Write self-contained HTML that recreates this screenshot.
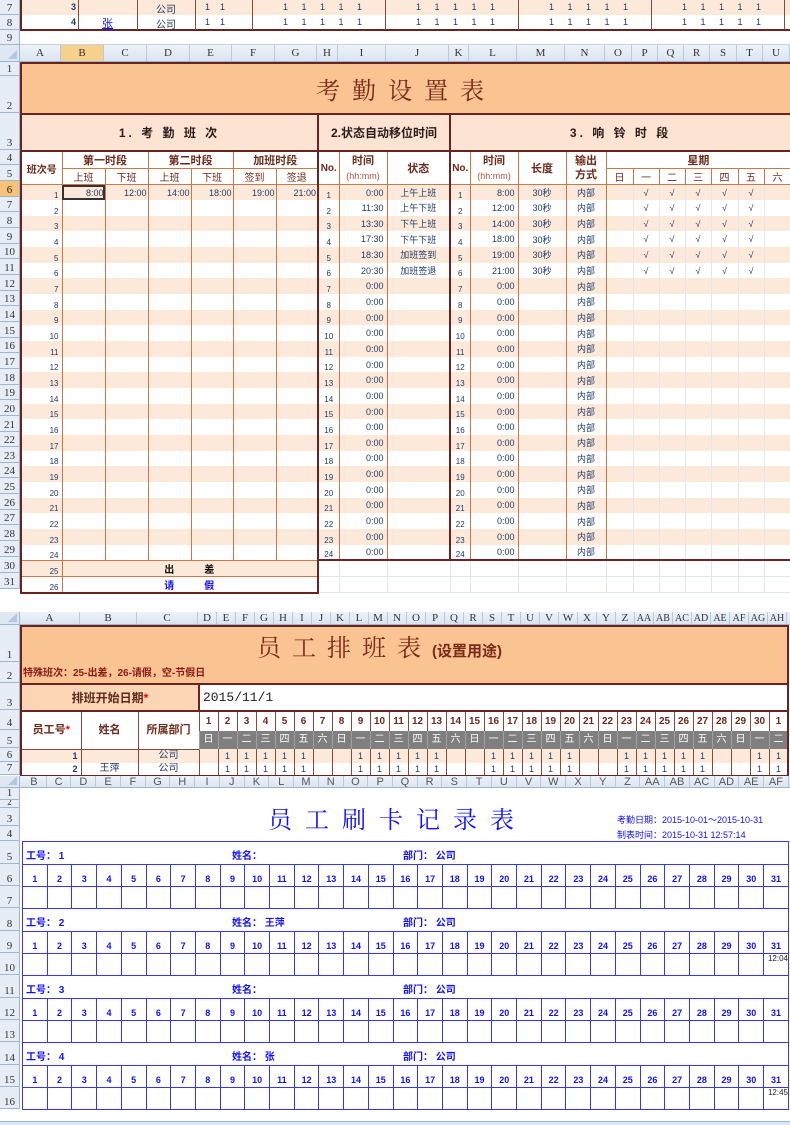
<!DOCTYPE html>
<html><head><meta charset="utf-8">
<style>
*{margin:0;padding:0;box-sizing:border-box}
body{width:790px;height:1125px;position:relative;overflow:hidden;background:#fff;font-family:"Liberation Sans","Noto Sans CJK SC",sans-serif}
.abs{position:absolute}
.rh{position:absolute;left:0;width:20px;display:flex;flex-direction:column;background:#e6edf6}
.rh div{border-bottom:1px solid #9eb6ce;border-right:1px solid #9eb6ce;font:11px "Liberation Serif","Noto Serif CJK SC",serif;color:#333;text-align:center;display:flex;align-items:flex-end;justify-content:center;padding-bottom:0px;line-height:12px;overflow:hidden}
.rh div.sel{background:#f7c27a;color:#222}
.ch{position:absolute;display:flex;height:100%;}
.chrow{position:absolute;left:0;width:790px;background:linear-gradient(#eef3fa,#dae4f1);border-bottom:1px solid #9eb6ce}
.chrow .corner{position:absolute;left:0;top:0;width:20px;height:100%;border-right:1px solid #9eb6ce;background:#dfe7f2}
.chrow .corner:after{content:"";position:absolute;right:2px;bottom:2px;border-left:9px solid transparent;border-bottom:9px solid #b7c7db}
.ch div{border-right:1px solid #b9c9dc;text-align:center;font:11px "Liberation Serif",serif;color:#333;display:flex;align-items:center;justify-content:center;overflow:hidden}
.ch.sans div{font-family:"Liberation Sans",sans-serif;color:#555}
table{border-collapse:collapse;table-layout:fixed}
td{padding:0;overflow:hidden;white-space:nowrap}
#t2{position:absolute;left:20px;top:62px;width:770px;font-size:9px;color:#1f3a6a}
#t2 td{border:0}
#t2 tr.b td{text-align:center;vertical-align:middle}
#t2 tr.p td{background:#fde9d9}
#t2 tr.w td{background:#fff}
#t2 tr.b td:nth-child(1){text-align:right;padding-right:3px;border-left:2px solid #6b2222;font-size:8px;vertical-align:bottom}
#t2 tr.b td:nth-child(n+2):nth-child(-n+7){border-left:1px solid #c8784a;text-align:right;padding-right:1px}
#t2 tr.b td:nth-child(7){border-right:2px solid #6b2222}
#t2 tr.b td:nth-child(8){font-size:8px;vertical-align:bottom}
#t2 tr.b td:nth-child(9){border-left:1px solid #c8784a;text-align:right;padding-right:3px}
#t2 tr.b td:nth-child(10){border-left:1px solid #c8784a}
#t2 tr.b td:nth-child(11){border-left:2px solid #6b2222;font-size:8px;vertical-align:bottom}
#t2 tr.b td:nth-child(12){border-left:1px solid #c8784a;text-align:right;padding-right:3px}
#t2 tr.b td:nth-child(13){border-left:1px solid #c8784a}
#t2 tr.b td:nth-child(14){border-left:1px solid #c8784a;border-right:1px solid #c8784a}
#t2 tr.b td:nth-child(n+16){border-left:1px solid #e2e6ee}
#t2 tr.b td:nth-child(21){border-right:2px solid #6b2222}
#t2 tr.b td.g{background:#fff !important;border-left:0 !important;border-right:1px solid #dfe6f0 !important;border-bottom:1px solid #dfe6f0}
#t2 tr.b td.c{text-align:center !important;font-weight:bold;font-size:10px;border-right:2px solid #6b2222 !important;border-left:1px solid #c8784a !important}
#t2 .hd td{color:#6b2a1a;font-weight:bold;font-size:11px;text-align:center;background:#fff;border-left:1px solid #c8784a;border-bottom:1px solid #c8784a}
#t2 .hd td.n{font-weight:normal;font-size:10px}
#t2 .L2{border-left:2px solid #6b2222 !important}
#t2 .R2{border-right:2px solid #6b2222 !important}
#t3{position:absolute;left:20px;top:625px;width:767px;font-size:9px;color:#1f3a6a}
#t3 td{text-align:center;border-left:1px solid #8a4a3a;line-height:10px}
#t3 .wd td{background:#7f7f7f;color:#fff;font-size:10px;border-left:1px solid #a0a0a0}
#t3 .dn td{font-weight:bold;color:#6b2a1a;font-size:10px}
.g4{position:absolute;left:22px;width:767px;font-size:9px;color:#1010ff;font-weight:bold}
.g4 table{width:767px}
.g4 td{border:1px solid #3535ff;text-align:center;vertical-align:bottom;height:22px;padding-bottom:2px}
.g4 .lab{height:23px;border:1px solid #3535ff;border-bottom:0;position:relative;font-size:10px}
.g4 .lab span{position:absolute;top:5px}
</style></head><body>

<div class="rh" style="top:0"><div style="height:15px">7</div><div style="height:15px">8</div><div style="height:15px">9</div></div>
<div class="abs" style="left:20px;top:0;width:770px;height:15px;background:#fde9d9"></div>
<div class="abs" style="left:20px;top:0;width:2px;height:31px;background:#6b2222"></div>
<div class="abs" style="left:20px;top:29px;width:770px;height:2px;background:#6b2222"></div>
<div class="abs" style="left:78px;top:0;width:1px;height:30px;background:#8a4a3a"></div>
<div class="abs" style="left:137px;top:0;width:1px;height:30px;background:#8a4a3a"></div>
<div class="abs" style="left:195px;top:0;width:1px;height:30px;background:#8a4a3a"></div>
<div class="abs" style="left:252px;top:0;width:1px;height:30px;background:#8a4a3a"></div>
<div class="abs" style="left:385px;top:0;width:1px;height:30px;background:#8a4a3a"></div>
<div class="abs" style="left:518px;top:0;width:1px;height:30px;background:#8a4a3a"></div>
<div class="abs" style="left:651px;top:0;width:1px;height:30px;background:#8a4a3a"></div>
<div class="abs" style="left:784px;top:0;width:1px;height:30px;background:#8a4a3a"></div>
<div class="abs" style="left:20px;top:44px;width:770px;height:1px;background:#c5d3e3"></div>
<div class="abs" style="left:0;top:2px;width:76px;text-align:right;font-size:9px;font-weight:bold;color:#1f3a6a">3</div>
<div class="abs" style="left:0;top:17px;width:76px;text-align:right;font-size:9px;font-weight:bold;color:#1f3a6a">4</div>
<div class="abs" style="left:137px;top:1px;width:58px;text-align:center;font-size:10px;color:#1f3a6a">公司</div>
<div class="abs" style="left:137px;top:16px;width:58px;text-align:center;font-size:10px;color:#1f3a6a">公司</div>
<div class="abs" style="left:78px;top:15px;width:59px;text-align:center;font-size:11px;color:#1010ff;text-decoration:underline">张</div>
<div class="abs" style="left:205px;top:2px;font-size:9px;color:#1f3a6a;white-space:pre">1    1</div>
<div class="abs" style="left:205px;top:17px;font-size:9px;color:#1f3a6a;white-space:pre">1    1</div>
<div class="abs" style="left:283px;top:2px;font-size:9px;color:#1f3a6a;white-space:pre;word-spacing:11px">1 1 1 1 1</div>
<div class="abs" style="left:283px;top:17px;font-size:9px;color:#1f3a6a;white-space:pre;word-spacing:11px">1 1 1 1 1</div>
<div class="abs" style="left:416px;top:2px;font-size:9px;color:#1f3a6a;white-space:pre;word-spacing:11px">1 1 1 1 1</div>
<div class="abs" style="left:549px;top:2px;font-size:9px;color:#1f3a6a;white-space:pre;word-spacing:11px">1 1 1 1 1</div>
<div class="abs" style="left:682px;top:2px;font-size:9px;color:#1f3a6a;white-space:pre;word-spacing:11px">1 1 1 1 1</div>
<div class="abs" style="left:416px;top:17px;font-size:9px;color:#1f3a6a;white-space:pre;word-spacing:11px">1 1 1 1 1</div>
<div class="abs" style="left:549px;top:17px;font-size:9px;color:#1f3a6a;white-space:pre;word-spacing:11px">1 1 1 1 1</div>
<div class="abs" style="left:682px;top:17px;font-size:9px;color:#1f3a6a;white-space:pre;word-spacing:11px">1 1 1 1 1</div>

<div class="chrow" style="top:45px;height:17px"><div class="corner"></div>
<div class="ch" style="left:20px">
<div style="width:41px">A</div><div style="width:43px;background:#f7d08c">B</div><div style="width:43px">C</div><div style="width:43px">D</div><div style="width:42px">E</div><div style="width:43px">F</div><div style="width:42px">G</div><div style="width:21px">H</div><div style="width:48px">I</div><div style="width:63px">J</div><div style="width:20px">K</div><div style="width:48px">L</div><div style="width:48px">M</div><div style="width:40px">N</div><div style="width:27px">O</div><div style="width:26px">P</div><div style="width:26px">Q</div><div style="width:26px">R</div><div style="width:27px">S</div><div style="width:26px">T</div><div style="width:27px">U</div>
</div></div>
<div class="rh" style="top:62px">
<div style="height:14px">1</div><div style="height:37px">2</div><div style="height:37px">3</div><div style="height:15px">4</div><div style="height:16px">5</div>
<div class="sel" style="height:15.667px">6</div><div style="height:15.667px">7</div><div style="height:15.667px">8</div><div style="height:15.667px">9</div><div style="height:15.667px">10</div><div style="height:15.667px">11</div><div style="height:15.667px">12</div><div style="height:15.667px">13</div><div style="height:15.667px">14</div><div style="height:15.667px">15</div><div style="height:15.667px">16</div><div style="height:15.667px">17</div><div style="height:15.667px">18</div><div style="height:15.667px">19</div><div style="height:15.667px">20</div><div style="height:15.667px">21</div><div style="height:15.667px">22</div><div style="height:15.667px">23</div><div style="height:15.667px">24</div><div style="height:15.667px">25</div><div style="height:15.667px">26</div><div style="height:15.667px">27</div><div style="height:15.667px">28</div><div style="height:15.667px">29</div>
<div style="height:16px">30</div><div style="height:16px">31</div></div>

<table id="t2">
<colgroup><col style="width:41px"><col style="width:43px"><col style="width:43px"><col style="width:43px"><col style="width:42px"><col style="width:43px"><col style="width:42px"><col style="width:21px"><col style="width:48px"><col style="width:63px"><col style="width:20px"><col style="width:48px"><col style="width:48px"><col style="width:40px"><col style="width:27px"><col style="width:26px"><col style="width:26px"><col style="width:26px"><col style="width:27px"><col style="width:26px"><col style="width:27px"></colgroup>
<tr style="height:51px"><td colspan="21" style="background:#f9c392;border:2px solid #6b2222;text-align:center;font:24px 'Liberation Serif','Noto Serif CJK SC',serif;color:#7a2a1a;letter-spacing:12px">考勤设置表</td></tr>
<tr style="height:37px">
<td colspan="7" style="background:#fde4d2;border:2px solid #6b2222;text-align:center;font-weight:bold;font-size:12px;color:#2a1a1a;letter-spacing:3px">1. 考 勤 班 次</td>
<td colspan="3" style="background:#fde4d2;border:2px solid #6b2222;text-align:center;font-weight:bold;font-size:12px;color:#2a1a1a">2.状态自动移位时间</td>
<td colspan="11" style="background:#fde4d2;border:2px solid #6b2222;text-align:center;font-weight:bold;font-size:12px;color:#2a1a1a;letter-spacing:3px">3. 响 铃 时 段</td></tr>
<tr class="hd" style="height:15px">
<td rowspan="2" class="L2" style="font-size:10px">班次号</td><td colspan="2">第一时段</td><td colspan="2">第二时段</td><td colspan="2" class="R2">加班时段</td>
<td rowspan="2" style="font-size:10px;border-left:0">No.</td><td style="border-bottom:0">时间</td><td rowspan="2">状态</td>
<td rowspan="2" class="L2" style="font-size:10px">No.</td><td style="border-bottom:0">时间</td><td rowspan="2">长度</td><td rowspan="2" style="line-height:14px">输出<br>方式</td><td colspan="7" class="R2">星期</td></tr>
<tr class="hd" style="height:16px">
<td class="n">上班</td><td class="n">下班</td><td class="n">上班</td><td class="n">下班</td><td class="n">签到</td><td class="n R2">签退</td>
<td class="n" style="color:#b0503a;font-size:9px">(hh:mm)</td><td class="n" style="color:#b0503a;font-size:9px">(hh:mm)</td>
<td class="n">日</td><td class="n">一</td><td class="n">二</td><td class="n">三</td><td class="n">四</td><td class="n">五</td><td class="n R2">六</td></tr>
<tr class="b p" style="height:15.667px"><td>1</td><td style="outline:2px solid #333;outline-offset:-2px">8:00</td><td>12:00</td><td>14:00</td><td>18:00</td><td>19:00</td><td>21:00</td><td>1</td><td>0:00</td><td>上午上班</td><td>1</td><td>8:00</td><td>30秒</td><td>内部</td><td></td><td>√</td><td>√</td><td>√</td><td>√</td><td>√</td><td></td></tr>
<tr class="b w" style="height:15.667px"><td>2</td><td></td><td></td><td></td><td></td><td></td><td></td><td>2</td><td>11:30</td><td>上午下班</td><td>2</td><td>12:00</td><td>30秒</td><td>内部</td><td></td><td>√</td><td>√</td><td>√</td><td>√</td><td>√</td><td></td></tr>
<tr class="b p" style="height:15.667px"><td>3</td><td></td><td></td><td></td><td></td><td></td><td></td><td>3</td><td>13:30</td><td>下午上班</td><td>3</td><td>14:00</td><td>30秒</td><td>内部</td><td></td><td>√</td><td>√</td><td>√</td><td>√</td><td>√</td><td></td></tr>
<tr class="b w" style="height:15.667px"><td>4</td><td></td><td></td><td></td><td></td><td></td><td></td><td>4</td><td>17:30</td><td>下午下班</td><td>4</td><td>18:00</td><td>30秒</td><td>内部</td><td></td><td>√</td><td>√</td><td>√</td><td>√</td><td>√</td><td></td></tr>
<tr class="b p" style="height:15.667px"><td>5</td><td></td><td></td><td></td><td></td><td></td><td></td><td>5</td><td>18:30</td><td>加班签到</td><td>5</td><td>19:00</td><td>30秒</td><td>内部</td><td></td><td>√</td><td>√</td><td>√</td><td>√</td><td>√</td><td></td></tr>
<tr class="b w" style="height:15.667px"><td>6</td><td></td><td></td><td></td><td></td><td></td><td></td><td>6</td><td>20:30</td><td>加班签退</td><td>6</td><td>21:00</td><td>30秒</td><td>内部</td><td></td><td>√</td><td>√</td><td>√</td><td>√</td><td>√</td><td></td></tr>
<tr class="b p" style="height:15.667px"><td>7</td><td></td><td></td><td></td><td></td><td></td><td></td><td>7</td><td>0:00</td><td></td><td>7</td><td>0:00</td><td></td><td>内部</td><td></td><td></td><td></td><td></td><td></td><td></td><td></td></tr>
<tr class="b w" style="height:15.667px"><td>8</td><td></td><td></td><td></td><td></td><td></td><td></td><td>8</td><td>0:00</td><td></td><td>8</td><td>0:00</td><td></td><td>内部</td><td></td><td></td><td></td><td></td><td></td><td></td><td></td></tr>
<tr class="b p" style="height:15.667px"><td>9</td><td></td><td></td><td></td><td></td><td></td><td></td><td>9</td><td>0:00</td><td></td><td>9</td><td>0:00</td><td></td><td>内部</td><td></td><td></td><td></td><td></td><td></td><td></td><td></td></tr>
<tr class="b w" style="height:15.667px"><td>10</td><td></td><td></td><td></td><td></td><td></td><td></td><td>10</td><td>0:00</td><td></td><td>10</td><td>0:00</td><td></td><td>内部</td><td></td><td></td><td></td><td></td><td></td><td></td><td></td></tr>
<tr class="b p" style="height:15.667px"><td>11</td><td></td><td></td><td></td><td></td><td></td><td></td><td>11</td><td>0:00</td><td></td><td>11</td><td>0:00</td><td></td><td>内部</td><td></td><td></td><td></td><td></td><td></td><td></td><td></td></tr>
<tr class="b w" style="height:15.667px"><td>12</td><td></td><td></td><td></td><td></td><td></td><td></td><td>12</td><td>0:00</td><td></td><td>12</td><td>0:00</td><td></td><td>内部</td><td></td><td></td><td></td><td></td><td></td><td></td><td></td></tr>
<tr class="b p" style="height:15.667px"><td>13</td><td></td><td></td><td></td><td></td><td></td><td></td><td>13</td><td>0:00</td><td></td><td>13</td><td>0:00</td><td></td><td>内部</td><td></td><td></td><td></td><td></td><td></td><td></td><td></td></tr>
<tr class="b w" style="height:15.667px"><td>14</td><td></td><td></td><td></td><td></td><td></td><td></td><td>14</td><td>0:00</td><td></td><td>14</td><td>0:00</td><td></td><td>内部</td><td></td><td></td><td></td><td></td><td></td><td></td><td></td></tr>
<tr class="b p" style="height:15.667px"><td>15</td><td></td><td></td><td></td><td></td><td></td><td></td><td>15</td><td>0:00</td><td></td><td>15</td><td>0:00</td><td></td><td>内部</td><td></td><td></td><td></td><td></td><td></td><td></td><td></td></tr>
<tr class="b w" style="height:15.667px"><td>16</td><td></td><td></td><td></td><td></td><td></td><td></td><td>16</td><td>0:00</td><td></td><td>16</td><td>0:00</td><td></td><td>内部</td><td></td><td></td><td></td><td></td><td></td><td></td><td></td></tr>
<tr class="b p" style="height:15.667px"><td>17</td><td></td><td></td><td></td><td></td><td></td><td></td><td>17</td><td>0:00</td><td></td><td>17</td><td>0:00</td><td></td><td>内部</td><td></td><td></td><td></td><td></td><td></td><td></td><td></td></tr>
<tr class="b w" style="height:15.667px"><td>18</td><td></td><td></td><td></td><td></td><td></td><td></td><td>18</td><td>0:00</td><td></td><td>18</td><td>0:00</td><td></td><td>内部</td><td></td><td></td><td></td><td></td><td></td><td></td><td></td></tr>
<tr class="b p" style="height:15.667px"><td>19</td><td></td><td></td><td></td><td></td><td></td><td></td><td>19</td><td>0:00</td><td></td><td>19</td><td>0:00</td><td></td><td>内部</td><td></td><td></td><td></td><td></td><td></td><td></td><td></td></tr>
<tr class="b w" style="height:15.667px"><td>20</td><td></td><td></td><td></td><td></td><td></td><td></td><td>20</td><td>0:00</td><td></td><td>20</td><td>0:00</td><td></td><td>内部</td><td></td><td></td><td></td><td></td><td></td><td></td><td></td></tr>
<tr class="b p" style="height:15.667px"><td>21</td><td></td><td></td><td></td><td></td><td></td><td></td><td>21</td><td>0:00</td><td></td><td>21</td><td>0:00</td><td></td><td>内部</td><td></td><td></td><td></td><td></td><td></td><td></td><td></td></tr>
<tr class="b w" style="height:15.667px"><td>22</td><td></td><td></td><td></td><td></td><td></td><td></td><td>22</td><td>0:00</td><td></td><td>22</td><td>0:00</td><td></td><td>内部</td><td></td><td></td><td></td><td></td><td></td><td></td><td></td></tr>
<tr class="b p" style="height:15.667px"><td>23</td><td></td><td></td><td></td><td></td><td></td><td></td><td>23</td><td>0:00</td><td></td><td>23</td><td>0:00</td><td></td><td>内部</td><td></td><td></td><td></td><td></td><td></td><td></td><td></td></tr>
<tr class="b w" style="height:15.667px"><td>24</td><td></td><td></td><td></td><td></td><td></td><td></td><td>24</td><td>0:00</td><td></td><td>24</td><td>0:00</td><td></td><td>内部</td><td></td><td></td><td></td><td></td><td></td><td></td><td></td></tr>
<tr class="b p" style="height:16px"><td style="border-top:1px solid #c8784a">25</td><td colspan="6" class="c" style="color:#111;border-top:1px solid #c8784a">出　　　差</td><td class="g" style="border-top:2px solid #6b2222"></td><td class="g" style="border-top:2px solid #6b2222"></td><td class="g" style="border-top:2px solid #6b2222"></td><td class="g" style="border-top:2px solid #6b2222"></td><td class="g" style="border-top:2px solid #6b2222"></td><td class="g" style="border-top:2px solid #6b2222"></td><td class="g" style="border-top:2px solid #6b2222"></td><td class="g" style="border-top:2px solid #6b2222"></td><td class="g" style="border-top:2px solid #6b2222"></td><td class="g" style="border-top:2px solid #6b2222"></td><td class="g" style="border-top:2px solid #6b2222"></td><td class="g" style="border-top:2px solid #6b2222"></td><td class="g" style="border-top:2px solid #6b2222"></td><td class="g" style="border-top:2px solid #6b2222"></td></tr>
<tr class="b w" style="height:16px"><td style="border-bottom:2px solid #6b2222;border-top:1px solid #c8784a">26</td><td colspan="6" class="c" style="color:#1010ff;border-bottom:2px solid #6b2222;border-top:1px solid #c8784a">请　　　假</td><td class="g"></td><td class="g"></td><td class="g"></td><td class="g"></td><td class="g"></td><td class="g"></td><td class="g"></td><td class="g"></td><td class="g"></td><td class="g"></td><td class="g"></td><td class="g"></td><td class="g"></td><td class="g"></td></tr>
</table>

<div class="chrow" style="top:612px;height:13px"><div class="corner"></div>
<div class="ch" style="left:20px">
<div style="width:60px">A</div><div style="width:57px">B</div><div style="width:61px">C</div><div style="width:19px">D</div><div style="width:19px">E</div><div style="width:19px">F</div><div style="width:19px">G</div><div style="width:19px">H</div><div style="width:19px">I</div><div style="width:19px">J</div><div style="width:19px">K</div><div style="width:19px">L</div><div style="width:19px">M</div><div style="width:19px">N</div><div style="width:19px">O</div><div style="width:19px">P</div><div style="width:19px">Q</div><div style="width:19px">R</div><div style="width:19px">S</div><div style="width:19px">T</div><div style="width:19px">U</div><div style="width:19px">V</div><div style="width:19px">W</div><div style="width:19px">X</div><div style="width:19px">Y</div><div style="width:19px">Z</div><div style="width:19px;font-size:10px">AA</div><div style="width:19px;font-size:10px">AB</div><div style="width:19px;font-size:10px">AC</div><div style="width:19px;font-size:10px">AD</div><div style="width:19px;font-size:10px">AE</div><div style="width:19px;font-size:10px">AF</div><div style="width:19px;font-size:10px">AG</div><div style="width:19px;font-size:10px">AH</div>
</div></div>
<div class="rh" style="top:625px">
<div style="height:37px">1</div><div style="height:21px">2</div><div style="height:27px">3</div><div style="height:20px">4</div><div style="height:18px">5</div><div style="height:14px">6</div><div style="height:13px">7</div></div>

<table id="t3">
<colgroup><col style="width:60px"><col style="width:57px"><col style="width:61px"><col span="31" style="width:19px"></colgroup>
<tr style="height:58px"><td colspan="34" style="background:#f9c392;border:2px solid #6b2222;position:relative;text-align:left">
<div class="abs" style="left:235px;top:7px;font:24px 'Liberation Serif','Noto Serif CJK SC',serif;color:#7a2a1a;letter-spacing:11px;line-height:30px">员工排班表<span style="font:bold 15px 'Liberation Sans','Noto Sans CJK SC',sans-serif;letter-spacing:0">(设置用途)</span></div>
<div class="abs" style="left:1px;top:41px;font-size:10px;font-weight:bold;color:#8a1a1a;line-height:12px">特殊班次：25-出差，26-请假，空-节假日</div></td></tr>
<tr style="height:27px"><td colspan="3" style="background:#fcd5b4;border:2px solid #6b2222;font-weight:bold;font-size:12px;color:#5a2a1a;line-height:14px">排班开始日期<span style="color:#e00">*</span></td><td colspan="31" style="border:2px solid #6b2222;text-align:left;padding-left:3px;font:13px 'Liberation Mono',monospace;color:#222;line-height:14px">2015/11/1</td></tr>
<tr class="dn" style="height:20px"><td rowspan="2" style="border-left:2px solid #6b2222;font-size:11px;line-height:13px">员工号<span style="color:#e00">*</span></td><td rowspan="2" style="border-left:1px solid #8a4a3a;font-size:11px;line-height:13px">姓名</td><td rowspan="2" style="font-size:11px;line-height:13px">所属部门</td>
<td>1</td><td>2</td><td>3</td><td>4</td><td>5</td><td>6</td><td>7</td><td>8</td><td>9</td><td>10</td><td>11</td><td>12</td><td>13</td><td>14</td><td>15</td><td>16</td><td>17</td><td>18</td><td>19</td><td>20</td><td>21</td><td>22</td><td>23</td><td>24</td><td>25</td><td>26</td><td>27</td><td>28</td><td>29</td><td>30</td><td style="border-right:2px solid #6b2222">1</td></tr>
<tr class="wd" style="height:18px"><td>日</td><td>一</td><td>二</td><td>三</td><td>四</td><td>五</td><td>六</td><td>日</td><td>一</td><td>二</td><td>三</td><td>四</td><td>五</td><td>六</td><td>日</td><td>一</td><td>二</td><td>三</td><td>四</td><td>五</td><td>六</td><td>日</td><td>一</td><td>二</td><td>三</td><td>四</td><td>五</td><td>六</td><td>日</td><td>一</td><td style="border-right:2px solid #6b2222">二</td></tr>
<tr style="height:14px;background:#fde9d9"><td style="border-left:2px solid #6b2222;text-align:right;padding-right:3px;font-weight:bold;border-top:1px solid #8a4a3a">1</td><td style="border-top:1px solid #8a4a3a"></td><td style="font-size:10px;border-top:1px solid #8a4a3a">公司</td><td></td><td>1</td><td>1</td><td>1</td><td>1</td><td>1</td><td></td><td></td><td>1</td><td>1</td><td>1</td><td>1</td><td>1</td><td></td><td></td><td>1</td><td>1</td><td>1</td><td>1</td><td>1</td><td></td><td></td><td>1</td><td>1</td><td>1</td><td>1</td><td>1</td><td></td><td></td><td>1</td><td style="border-right:2px solid #6b2222">1</td></tr>
<tr style="height:13px;background:#fff"><td style="border-left:2px solid #6b2222;border-bottom:2px solid #6b2222;text-align:right;padding-right:3px;font-weight:bold">2</td><td style="font-size:10px;border-bottom:2px solid #6b2222">王萍</td><td style="font-size:10px;border-bottom:2px solid #6b2222">公司</td><td style="border-bottom:2px solid #6b2222"></td><td style="border-bottom:2px solid #6b2222">1</td><td style="border-bottom:2px solid #6b2222">1</td><td style="border-bottom:2px solid #6b2222">1</td><td style="border-bottom:2px solid #6b2222">1</td><td style="border-bottom:2px solid #6b2222">1</td><td style="border-bottom:2px solid #6b2222"></td><td style="border-bottom:2px solid #6b2222"></td><td style="border-bottom:2px solid #6b2222">1</td><td style="border-bottom:2px solid #6b2222">1</td><td style="border-bottom:2px solid #6b2222">1</td><td style="border-bottom:2px solid #6b2222">1</td><td style="border-bottom:2px solid #6b2222">1</td><td style="border-bottom:2px solid #6b2222"></td><td style="border-bottom:2px solid #6b2222"></td><td style="border-bottom:2px solid #6b2222">1</td><td style="border-bottom:2px solid #6b2222">1</td><td style="border-bottom:2px solid #6b2222">1</td><td style="border-bottom:2px solid #6b2222">1</td><td style="border-bottom:2px solid #6b2222">1</td><td style="border-bottom:2px solid #6b2222"></td><td style="border-bottom:2px solid #6b2222"></td><td style="border-bottom:2px solid #6b2222">1</td><td style="border-bottom:2px solid #6b2222">1</td><td style="border-bottom:2px solid #6b2222">1</td><td style="border-bottom:2px solid #6b2222">1</td><td style="border-bottom:2px solid #6b2222">1</td><td style="border-bottom:2px solid #6b2222"></td><td style="border-bottom:2px solid #6b2222"></td><td style="border-bottom:2px solid #6b2222">1</td><td style="border-bottom:2px solid #6b2222;border-right:2px solid #6b2222">1</td></tr>
</table>

<div class="chrow" style="top:776px;height:12px"><div class="corner"></div>
<div class="ch sans" style="left:22px">
<div style="width:24.74px">B</div><div style="width:24.74px">C</div><div style="width:24.74px">D</div><div style="width:24.74px">E</div><div style="width:24.74px">F</div><div style="width:24.74px">G</div><div style="width:24.74px">H</div><div style="width:24.74px">I</div><div style="width:24.74px">J</div><div style="width:24.74px">K</div><div style="width:24.74px">L</div><div style="width:24.74px">M</div><div style="width:24.74px">N</div><div style="width:24.74px">O</div><div style="width:24.74px">P</div><div style="width:24.74px">Q</div><div style="width:24.74px">R</div><div style="width:24.74px">S</div><div style="width:24.74px">T</div><div style="width:24.74px">U</div><div style="width:24.74px">V</div><div style="width:24.74px">W</div><div style="width:24.74px">X</div><div style="width:24.74px">Y</div><div style="width:24.74px">Z</div><div style="width:24.74px">AA</div><div style="width:24.74px">AB</div><div style="width:24.74px">AC</div><div style="width:24.74px">AD</div><div style="width:24.74px">AE</div><div style="width:24.74px">AF</div>
</div></div>
<div class="rh" style="top:788px">
<div style="height:12px">1</div><div style="height:8px;font-size:9px;line-height:9px">2</div><div style="height:18px">3</div><div style="height:15px">4</div>
<div style="height:23px">5</div><div style="height:22px">6</div><div style="height:22px">7</div>
<div style="height:23px">8</div><div style="height:22px">9</div><div style="height:22px">10</div>
<div style="height:23px">11</div><div style="height:22px">12</div><div style="height:22px">13</div>
<div style="height:23px">14</div><div style="height:22px">15</div><div style="height:22px">16</div></div>

<div class="abs" style="left:268px;top:800px;font:24px 'Liberation Serif','Noto Serif CJK SC',serif;color:#1010ff;letter-spacing:13px">员工刷卡记录表</div>
<div class="abs" style="left:617px;top:813px;font-size:9px;color:#1010ff;line-height:15px">考勤日期：2015-10-01～2015-10-31<br>制表时间：2015-10-31  12:57:14</div>

<div class="g4" style="top:841px">
<div class="lab"><span style="left:3px">工号：  1</span><span style="left:209px">姓名：</span><span style="left:380px">部门：  公司</span></div>
<table><tr><td>1</td><td>2</td><td>3</td><td>4</td><td>5</td><td>6</td><td>7</td><td>8</td><td>9</td><td>10</td><td>11</td><td>12</td><td>13</td><td>14</td><td>15</td><td>16</td><td>17</td><td>18</td><td>19</td><td>20</td><td>21</td><td>22</td><td>23</td><td>24</td><td>25</td><td>26</td><td>27</td><td>28</td><td>29</td><td>30</td><td>31</td></tr>
<tr><td></td><td></td><td></td><td></td><td></td><td></td><td></td><td></td><td></td><td></td><td></td><td></td><td></td><td></td><td></td><td></td><td></td><td></td><td></td><td></td><td></td><td></td><td></td><td></td><td></td><td></td><td></td><td></td><td></td><td></td><td></td></tr></table>
</div>
<div class="g4" style="top:908px">
<div class="lab"><span style="left:3px">工号：  2</span><span style="left:209px">姓名：  王萍</span><span style="left:380px">部门：  公司</span></div>
<table><tr><td>1</td><td>2</td><td>3</td><td>4</td><td>5</td><td>6</td><td>7</td><td>8</td><td>9</td><td>10</td><td>11</td><td>12</td><td>13</td><td>14</td><td>15</td><td>16</td><td>17</td><td>18</td><td>19</td><td>20</td><td>21</td><td>22</td><td>23</td><td>24</td><td>25</td><td>26</td><td>27</td><td>28</td><td>29</td><td>30</td><td>31</td></tr>
<tr><td></td><td></td><td></td><td></td><td></td><td></td><td></td><td></td><td></td><td></td><td></td><td></td><td></td><td></td><td></td><td></td><td></td><td></td><td></td><td></td><td></td><td></td><td></td><td></td><td></td><td></td><td></td><td></td><td></td><td></td><td style="vertical-align:top;font-weight:normal;color:#222;font-size:8px;text-align:right">12:04</td></tr></table>
</div>
<div class="g4" style="top:975px">
<div class="lab"><span style="left:3px">工号：  3</span><span style="left:209px">姓名：</span><span style="left:380px">部门：  公司</span></div>
<table><tr><td>1</td><td>2</td><td>3</td><td>4</td><td>5</td><td>6</td><td>7</td><td>8</td><td>9</td><td>10</td><td>11</td><td>12</td><td>13</td><td>14</td><td>15</td><td>16</td><td>17</td><td>18</td><td>19</td><td>20</td><td>21</td><td>22</td><td>23</td><td>24</td><td>25</td><td>26</td><td>27</td><td>28</td><td>29</td><td>30</td><td>31</td></tr>
<tr><td></td><td></td><td></td><td></td><td></td><td></td><td></td><td></td><td></td><td></td><td></td><td></td><td></td><td></td><td></td><td></td><td></td><td></td><td></td><td></td><td></td><td></td><td></td><td></td><td></td><td></td><td></td><td></td><td></td><td></td><td></td></tr></table>
</div>
<div class="g4" style="top:1042px">
<div class="lab"><span style="left:3px">工号：  4</span><span style="left:209px">姓名：  张</span><span style="left:380px">部门：  公司</span></div>
<table><tr><td>1</td><td>2</td><td>3</td><td>4</td><td>5</td><td>6</td><td>7</td><td>8</td><td>9</td><td>10</td><td>11</td><td>12</td><td>13</td><td>14</td><td>15</td><td>16</td><td>17</td><td>18</td><td>19</td><td>20</td><td>21</td><td>22</td><td>23</td><td>24</td><td>25</td><td>26</td><td>27</td><td>28</td><td>29</td><td>30</td><td>31</td></tr>
<tr><td></td><td></td><td></td><td></td><td></td><td></td><td></td><td></td><td></td><td></td><td></td><td></td><td></td><td></td><td></td><td></td><td></td><td></td><td></td><td></td><td></td><td></td><td></td><td></td><td></td><td></td><td></td><td></td><td></td><td></td><td style="vertical-align:top;font-weight:normal;color:#222;font-size:8px;text-align:right">12:45</td></tr></table>
</div>
<div class="abs" style="left:0;top:1121px;width:790px;height:4px;background:#dbe6f3;border-top:1px solid #9eb6ce"></div>
</body></html>
